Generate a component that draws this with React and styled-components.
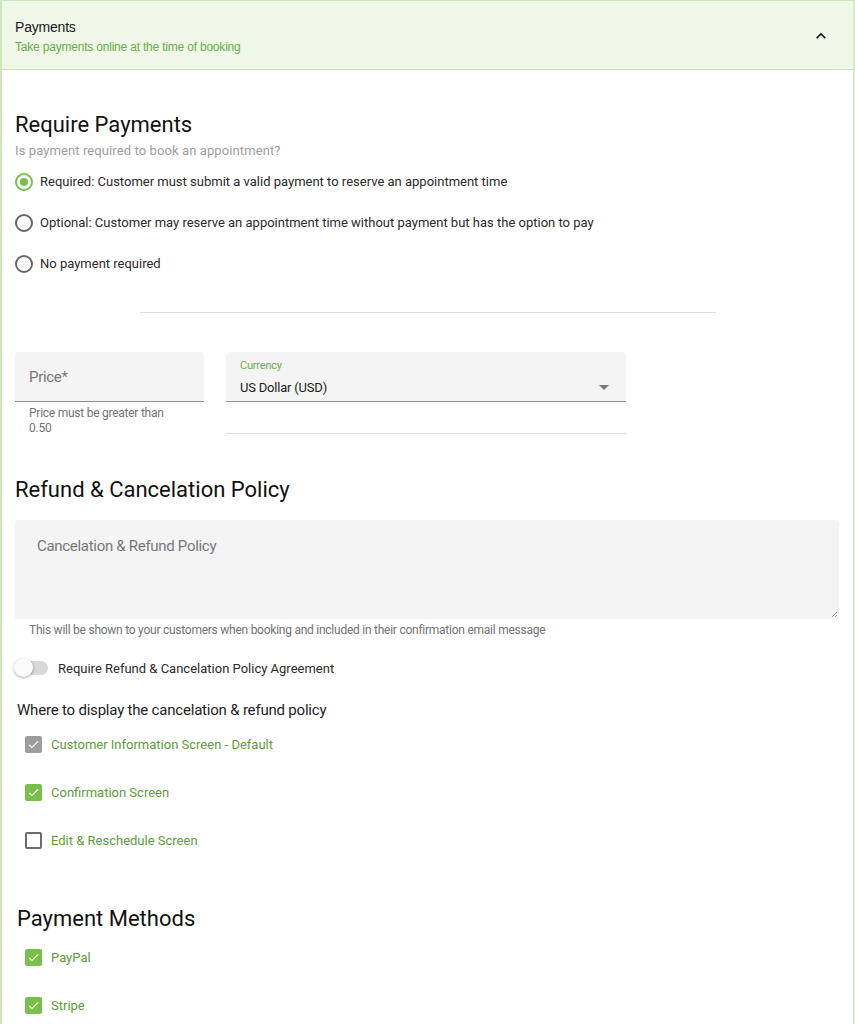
import styled, { createGlobalStyle } from 'styled-components'

const green = '#6aad45'
const greenText = '#5c9e38'
const boxGreen = '#78bf4c'

const GlobalStyle = createGlobalStyle`
  html, body {
    margin: 0;
    padding: 0;
    background: #fff;
  }
  body {
    font-family: Roboto, 'Noto Sans', sans-serif;
    color: #222;
  }
`

const Panel = styled.div`
  width: 855px;
  box-sizing: border-box;
  border-left: 2px solid #cfe6bd;
  border-right: 2px solid #d7ebc8;
  min-height: 1024px;
`

const Header = styled.div`
  height: 70px;
  box-sizing: border-box;
  background: #eff7e9;
  border-top: 1px solid #cfe6bd;
  border-bottom: 1px solid #c9e2b4;
  display: flex;
  align-items: center;
  justify-content: space-between;
  padding: 2px 22px 0 13px;
`

const HeaderText = styled.div`
  display: flex;
  flex-direction: column;
  gap: 5px;
  font-family: 'Liberation Sans', Arial, sans-serif;
`

const HeaderTitle = styled.div`
  font-size: 14px;
  color: #1a1a1a;
  letter-spacing: -0.2px;
`

const HeaderSub = styled.div`
  font-size: 12px;
  color: ${green};
  letter-spacing: -0.2px;
`

const Body = styled.div`
  padding: 0 0 0 13px;
  display: flex;
  flex-direction: column;
`

const Heading = styled.h2`
  margin: ${(p) => p.$top || 0}px 0 0 ${(p) => p.$indent || 0}px;
  font-size: 22px;
  line-height: 26px;
  font-weight: 400;
  color: #111;
`

const Question = styled.div`
  margin-top: 3px;
  font-size: 13px;
  line-height: 20px;
  color: #9e9e9e;
  letter-spacing: 0.1px;
`

const RadioList = styled.div`
  display: flex;
  flex-direction: column;
`

const RadioRow = styled.label`
  display: flex;
  align-items: center;
  gap: 7px;
  height: 41px;
  font-size: 13px;
  color: #2a2a2a;
`

const RadioCircle = styled.span`
  width: 18px;
  height: 18px;
  box-sizing: border-box;
  border-radius: 50%;
  border: 2px solid ${(p) => (p.$on ? boxGreen : '#666')};
  display: flex;
  align-items: center;
  justify-content: center;
  &::after {
    content: '';
    width: 8px;
    height: 8px;
    border-radius: 50%;
    background: ${boxGreen};
    display: ${(p) => (p.$on ? 'block' : 'none')};
  }
`

const Divider = styled.hr`
  margin: 28px 0 0 125px;
  width: 576px;
  border: none;
  border-top: 1px solid #dcdcdc;
`

const FieldRow = styled.div`
  display: flex;
  gap: 22px;
  margin-top: 39px;
`

const FieldCol = styled.div`
  display: flex;
  flex-direction: column;
  width: ${(p) => p.$w}px;
`

const FilledField = styled.div`
  height: 50px;
  box-sizing: border-box;
  background: #f4f4f4;
  border-radius: 4px 4px 0 0;
  border-bottom: 1px solid #8d8d8d;
  padding: 0 14px;
  display: flex;
  flex-direction: column;
  justify-content: center;
  position: relative;
`

const Placeholder = styled.div`
  font-size: 15px;
  color: #777;
  letter-spacing: -0.3px;
`

const SmallLabel = styled.div`
  font-size: 11px;
  color: ${green};
  letter-spacing: -0.2px;
`

const Value = styled.div`
  font-size: 13px;
  color: #222;
  margin-top: 8px;
  letter-spacing: -0.2px;
`

const Arrow = styled.svg`
  position: absolute;
  right: 10px;
  top: 23px;
`

const Helper = styled.div`
  padding: 4px 14px 0;
  font-size: 12px;
  line-height: 15px;
  color: #737373;
  letter-spacing: -0.25px;
`

const UnderLine = styled.div`
  margin-top: 31px;
  border-top: 1px solid #dedede;
`

const TextArea = styled.div`
  margin-top: 17px;
  margin-right: 14px;
  height: 99px;
  box-sizing: border-box;
  background: #f4f4f4;
  border-radius: 4px 4px 0 0;
  padding: 17px 22px;
  position: relative;
`

const Resize = styled.svg`
  position: absolute;
  right: 1px;
  bottom: 1px;
`

const HelperWide = styled.div`
  margin-top: 4px;
  padding-left: 14px;
  font-size: 12px;
  line-height: 14px;
  color: #737373;
  letter-spacing: -0.25px;
`

const SwitchRow = styled.label`
  margin-top: 21px;
  display: flex;
  align-items: center;
  gap: 10px;
  font-size: 13px;
  color: #2a2a2a;
  height: 20px;
`

const Track = styled.span`
  width: 33px;
  height: 14px;
  border-radius: 7px;
  background: #d8d8d8;
  position: relative;
  display: block;
`

const Thumb = styled.span`
  position: absolute;
  left: -1px;
  top: -3px;
  width: 19px;
  height: 19px;
  border-radius: 50%;
  background: #fafafa;
  box-shadow: 0 1px 3px rgba(0, 0, 0, 0.35);
`

const SubHeading = styled.div`
  margin: 22px 0 0 2px;
  font-size: 15px;
  line-height: 20px;
  color: #1e1e1e;
  letter-spacing: -0.2px;
`

const CheckList = styled.div`
  display: flex;
  flex-direction: column;
  margin: ${(p) => p.$top}px 0 0 10px;
`

const CheckRow = styled.label`
  display: flex;
  align-items: center;
  gap: 9px;
  height: 48px;
  font-size: 13px;
  color: ${greenText};
`

const Box = styled.span`
  width: 17px;
  height: 17px;
  box-sizing: border-box;
  border-radius: 2px;
  background: ${(p) => (p.$state === 'on' ? boxGreen : p.$state === 'grey' ? '#9d9d9d' : 'transparent')};
  border: ${(p) => (p.$state === 'off' ? '2px solid #6c6c6c' : 'none')};
  display: flex;
  align-items: center;
  justify-content: center;
`

const Chevron = () => (
  <svg width="20" height="20" viewBox="0 0 24 24">
    <path d="M12 8l-6 6 1.41 1.41L12 10.83l4.59 4.58L18 14z" fill="#111" />
  </svg>
)

const Check = ({ state, label }) => (
  <CheckRow>
    <Box $state={state}>
      {state !== 'off' && (
        <svg width="13" height="13" viewBox="0 0 24 24">
          <path d="M9 16.17L4.83 12l-1.42 1.41L9 19 21 7l-1.41-1.41z" fill="#fff" />
        </svg>
      )}
    </Box>
    {label}
  </CheckRow>
)

const Radio = ({ on, label }) => (
  <RadioRow>
    <RadioCircle $on={on} />
    {label}
  </RadioRow>
)

export default function App() {
  return (
    <>
      <GlobalStyle />
      <Panel>
        <Header>
          <HeaderText>
            <HeaderTitle>Payments</HeaderTitle>
            <HeaderSub>Take payments online at the time of booking</HeaderSub>
          </HeaderText>
          <Chevron />
        </Header>
        <Body>
          <Heading $top={42}>Require Payments</Heading>
          <Question>Is payment required to book an appointment?</Question>
          <RadioList>
            <Radio on label="Required: Customer must submit a valid payment to reserve an appointment time" />
            <Radio label="Optional: Customer may reserve an appointment time without payment but has the option to pay" />
            <Radio label="No payment required" />
          </RadioList>
          <Divider />
          <FieldRow>
            <FieldCol $w={189}>
              <FilledField>
                <Placeholder>Price*</Placeholder>
              </FilledField>
              <Helper>
                Price must be greater than
                <br />
                0.50
              </Helper>
            </FieldCol>
            <FieldCol $w={400}>
              <FilledField>
                <SmallLabel>Currency</SmallLabel>
                <Value>US Dollar (USD)</Value>
                <Arrow width="24" height="24" viewBox="0 0 24 24">
                  <path d="M7 10l5 5 5-5z" fill="#777" />
                </Arrow>
              </FilledField>
              <UnderLine />
            </FieldCol>
          </FieldRow>
          <Heading $top={41}>Refund &amp; Cancelation Policy</Heading>
          <TextArea>
            <Placeholder>Cancelation &amp; Refund Policy</Placeholder>
            <Resize width="7" height="7" viewBox="0 0 7 7">
              <path d="M6 1L1 6M6 4L4 6" stroke="#999" strokeWidth="1" />
            </Resize>
          </TextArea>
          <HelperWide>
            This will be shown to your customers when booking and included in their confirmation email message
          </HelperWide>
          <SwitchRow>
            <Track>
              <Thumb />
            </Track>
            Require Refund &amp; Cancelation Policy Agreement
          </SwitchRow>
          <SubHeading>Where to display the cancelation &amp; refund policy</SubHeading>
          <CheckList $top={0}>
            <Check state="grey" label="Customer Information Screen - Default" />
            <Check state="on" label="Confirmation Screen" />
            <Check state="off" label="Edit & Reschedule Screen" />
          </CheckList>
          <Heading $top={42} $indent={2}>
            Payment Methods
          </Heading>
          <CheckList $top={1}>
            <Check state="on" label="PayPal" />
            <Check state="on" label="Stripe" />
          </CheckList>
        </Body>
      </Panel>
    </>
  )
}
